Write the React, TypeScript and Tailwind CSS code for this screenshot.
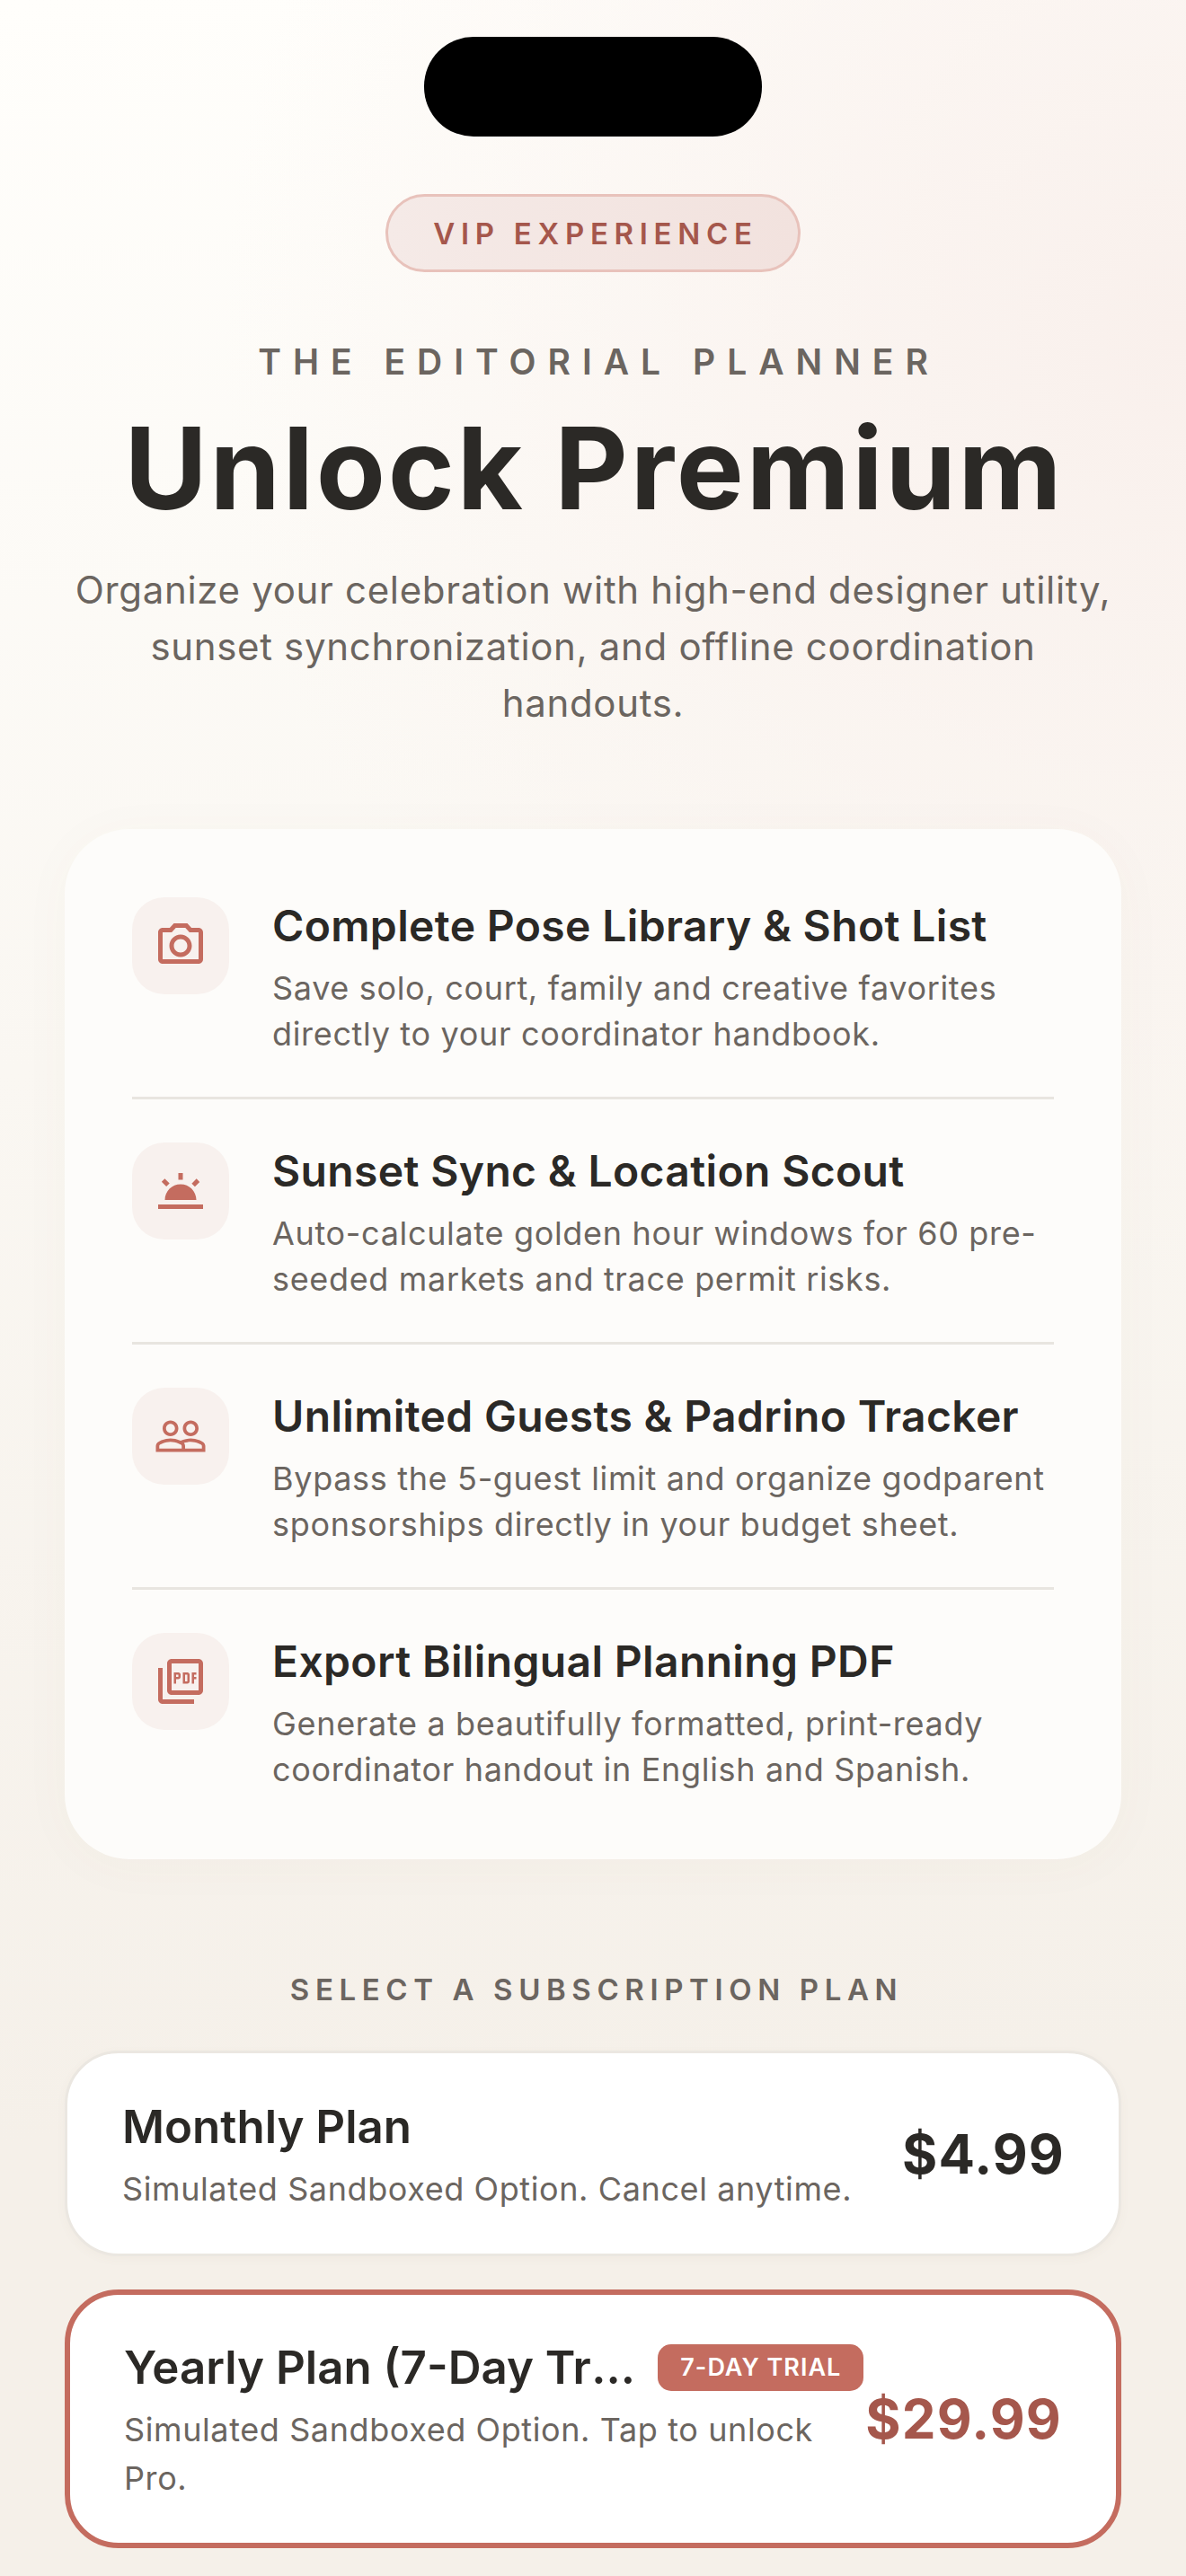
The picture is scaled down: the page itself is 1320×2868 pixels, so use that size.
import type { ReactNode } from "react";
import {
  MdOutlinePhotoCamera,
  MdOutlinePictureAsPdf,
  MdPeopleOutline,
  MdWbTwilight,
} from "react-icons/md";

type Feature = {
  icon: ReactNode;
  title: string;
  body: string;
};

const features: Feature[] = [
  {
    icon: <MdOutlinePhotoCamera size={60} />,
    title: "Complete Pose Library & Shot List",
    body: "Save solo, court, family and creative favorites directly to your coordinator handbook.",
  },
  {
    icon: <MdWbTwilight size={60} />,
    title: "Sunset Sync & Location Scout",
    body: "Auto-calculate golden hour windows for 60 pre-seeded markets and trace permit risks.",
  },
  {
    icon: <MdPeopleOutline size={60} />,
    title: "Unlimited Guests & Padrino Tracker",
    body: "Bypass the 5-guest limit and organize godparent sponsorships directly in your budget sheet.",
  },
  {
    icon: <MdOutlinePictureAsPdf size={60} />,
    title: "Export Bilingual Planning PDF",
    body: "Generate a beautifully formatted, print-ready coordinator handout in English and Spanish.",
  },
];

function FeatureRow({ feature, last }: { feature: Feature; last: boolean }) {
  return (
    <div className={last ? "flex gap-[48px]" : "mb-[48px] flex gap-[48px] border-b-[3px] border-[#e8e5e0] pb-[44px]"}>
      <div className="flex size-[108px] shrink-0 items-center justify-center rounded-[36px] bg-[#f8f1ee] text-[#c46c5f]">
        {feature.icon}
      </div>
      <div className="min-w-0 flex-1 pt-[2px]">
        <h3 className="text-[48px] leading-[60px] font-semibold tracking-[0.35px] text-[#2b2926]">{feature.title}</h3>
        <p className="mt-[14px] text-[36px] leading-[51px] tracking-[0.67px] text-[#6b6560]">{feature.body}</p>
      </div>
    </div>
  );
}

export default function App() {
  return (
    <div className="h-[2868px] w-[1320px] overflow-hidden bg-[radial-gradient(circle_at_100%_13%,#f9f0ec_0%,rgba(249,240,236,0)_38%),linear-gradient(175deg,#fffefb_0%,#f5f0e9_80%,#f5f0e9_100%)] font-['Inter',sans-serif]">
      <div className="flex flex-col items-center px-[72px] pt-[41px]">
        <div className="h-[111px] w-[376px] rounded-[55px] bg-black" />

        <div className="mt-[64px] flex h-[87px] w-[462px] items-center justify-center rounded-full border-[3px] border-[#e8c2bb] bg-[linear-gradient(90deg,#f5eae7,#f2e2de)] pl-[6px] pt-[2px]">
          <span className="text-[33px] font-semibold tracking-[6.7px] text-[#a5574c]">VIP EXPERIENCE</span>
        </div>

        <p className="mt-[76px] pl-[13px] text-[39px] leading-[48px] font-semibold tracking-[13px] text-[#6b6560]">THE EDITORIAL PLANNER</p>

        <h1 className="mt-[19px] pl-[3px] text-[126px] leading-[150px] font-bold tracking-[2.8px] text-[#2b2926]">Unlock Premium</h1>

        <p className="mt-[29px] w-[1176px] text-center text-[42px] leading-[63px] tracking-[0.67px] text-[#6b6560]">
          Organize your celebration with high-end designer utility, sunset synchronization, and offline coordination handouts.
        </p>

        <section className="mt-[109px] w-[1176px] rounded-[72px] bg-[#fdfcfa] px-[75px] pt-[76px] pb-[74px] shadow-[0_6px_60px_rgba(120,90,70,0.03)]">
          {features.map((feature, index) => (
            <FeatureRow key={feature.title} feature={feature} last={index === features.length - 1} />
          ))}
        </section>

        <p className="mt-[125px] pl-[8px] text-[33px] leading-[40px] font-semibold tracking-[6.6px] text-[#6b6560]">SELECT A SUBSCRIPTION PLAN</p>

        <div className="mt-[48px] flex w-[1176px] flex-col gap-[37px]">
          <div className="flex items-center gap-[24px] rounded-[60px] border-[3px] border-[#ebe7e1] bg-white pt-[46px] pr-[60px] pb-[45px] pl-[61px] shadow-[0_3px_12px_rgba(120,90,70,0.04)]">
            <div className="min-w-0 flex-1 pt-[6px]">
              <h4 className="text-[51px] leading-[60px] font-semibold text-[#2b2926]">Monthly Plan</h4>
              <p className="mt-[12px] text-[36px] leading-[54px] tracking-[0.6px] text-[#6b6560]">Simulated Sandboxed Option. Cancel anytime.</p>
            </div>
            <span className="shrink-0 text-[60px] font-bold tracking-[1.2px] text-[#2b2926]">$4.99</span>
          </div>

          <div className="flex items-center gap-[2px] rounded-[60px] border-[6px] border-[#c46c5f] bg-white px-[60px] py-[45px]">
            <div className="min-w-0 flex-1 pt-[6px]">
              <div className="flex items-center gap-[20px]">
                <h4 className="min-w-0 truncate text-[51px] leading-[60px] font-semibold text-[#2b2926]">Yearly Plan (7-Day Trial)</h4>
                <span className="flex h-[52px] shrink-0 items-center rounded-[15px] bg-[#c46c5f] px-[25px] text-[27px] font-semibold tracking-[1px] text-white">7-DAY TRIAL</span>
              </div>
              <p className="mt-[12px] text-[36px] leading-[54px] tracking-[0.6px] text-[#6b6560]">Simulated Sandboxed Option. Tap to unlock Pro.</p>
            </div>
            <span className="shrink-0 text-[60px] font-bold tracking-[1.2px] text-[#a5574c]">$29.99</span>
          </div>
        </div>
      </div>
    </div>
  );
}
